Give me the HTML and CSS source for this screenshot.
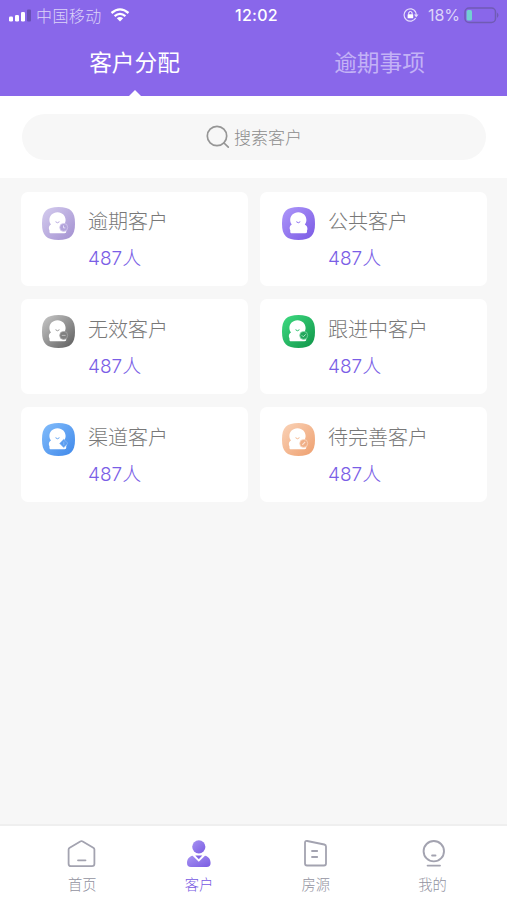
FILE: index.html
```
<!DOCTYPE html>
<html lang="zh-CN">
<head>
    <meta charset="UTF-8">
    <meta name="viewport" content="width=device-width, initial-scale=1.0">
    <title>客户分配</title>
    <link rel="stylesheet" href="styles.css">
</head>
<body>
    <!-- shared shapes and gradients -->
    <svg class="defs" width="0" height="0">
        <defs>
            <linearGradient id="g-overdue" x1="0" y1="0" x2="1" y2="1"><stop offset="0" stop-color="#d5cdef"/><stop offset="1" stop-color="#a28fd0"/></linearGradient>
            <linearGradient id="g-public" x1="0" y1="0" x2="1" y2="1"><stop offset="0" stop-color="#ae98fa"/><stop offset="1" stop-color="#7a59e4"/></linearGradient>
            <linearGradient id="g-invalid" x1="0" y1="0" x2="1" y2="1"><stop offset="0" stop-color="#c9c9c9"/><stop offset="1" stop-color="#5c5c5c"/></linearGradient>
            <linearGradient id="g-follow" x1="0" y1="0" x2="1" y2="1"><stop offset="0" stop-color="#3fdc82"/><stop offset="1" stop-color="#0f9448"/></linearGradient>
            <linearGradient id="g-channel" x1="0" y1="0" x2="1" y2="1"><stop offset="0" stop-color="#83bdfb"/><stop offset="1" stop-color="#3f88ea"/></linearGradient>
            <linearGradient id="g-todo" x1="0" y1="0" x2="1" y2="1"><stop offset="0" stop-color="#fad3b8"/><stop offset="1" stop-color="#ee9f6e"/></linearGradient>
            <linearGradient id="g-user" x1="0" y1="0" x2="1" y2="1"><stop offset="0" stop-color="#a793f2"/><stop offset="1" stop-color="#7a5ce2"/></linearGradient>
            <path id="tile" d="M16.500 0C28.500 0 33 4.500 33 16.500S28.500 33 16.500 33 0 28.500 0 16.500 4.500 0 16.500 0Z"/>
            <g id="person">
                <path fill="#fff" stroke="none" d="M15.500 5.300C20.400 5.300 23.600 9 23.600 13.100C23.600 14.900 23 16.300 22 17.400C23.900 18.500 24.900 20.300 24.600 22.200C24.400 23.300 24 23.500 24.200 24.300C24.500 25.500 23.700 26.300 22.500 26.300H9.200C7.800 26.300 7.200 25.400 7.500 24.200C7.700 23.300 7.100 22.900 6.900 21.800C6.600 19.900 7.400 18.400 9 17.400C8 16.300 7.400 14.900 7.400 13.100C7.400 9 10.600 5.300 15.500 5.300Z"/>
                <path class="smile" d="M13.800 15Q15.500 16.800 17.200 15"/>
            </g>
        </defs>
    </svg>

    <div class="phone">
        <header class="header">
            <div class="status">
                <div class="status-left">
                    <svg class="signal" width="23" height="13" viewBox="0 0 23 13">
                        <rect x="0" y="7.500" width="4" height="5" rx="1.300" fill="#fff"/>
                        <rect x="6" y="6" width="4" height="6.500" rx="1.300" fill="#fff"/>
                        <rect x="12" y="3" width="4" height="9.500" rx="1.300" fill="#fff"/>
                        <rect x="18" y="0.500" width="4" height="12" rx="1" fill="#6950b6"/>
                    </svg>
                    <span class="carrier">中国移动</span>
                    <svg class="wifi" width="20" height="14" viewBox="0 0 20 14">
                        <path d="M1.500 5Q10 -2.200 18.500 5M4.600 8.200Q10 3.600 15.400 8.200" fill="none" stroke="#fff" stroke-width="2.300"/>
                        <path d="M6.800 10.300Q10 7.800 13.200 10.300L10 13.600Z" fill="#fff"/>
                    </svg>
                </div>
                <span class="time">12:02</span>
                <div class="status-right">
                    <svg class="lock" width="16" height="14" viewBox="0 0 16 14">
                        <path d="M12.700 4A6.200 6.200 0 1 0 12.700 10" fill="none" stroke="#e4dcfb" stroke-width="1.200"/>
                        <path d="M12 3A6.200 6.200 0 0 1 13.200 7.500" fill="none" stroke="#e4dcfb" stroke-width="1.200"/>
                        <path d="M11 6.500H15.500L13.200 9.500Z" fill="#e4dcfb"/>
                        <rect x="4.600" y="6.300" width="5.600" height="4" rx="0.500" fill="#fff"/>
                        <path d="M5.700 6.500V5.200a1.700 1.700 0 0 1 3.400 0V6.500" fill="none" stroke="#fff"/>
                    </svg>
                    <span class="percent">18%</span>
                    <svg class="battery" width="36" height="17" viewBox="0 0 36 17">
                        <rect x="1" y="1" width="30.500" height="14.500" rx="4" fill="none" stroke="#705bb4" stroke-width="1.500"/>
                        <rect x="2.600" y="3" width="5.400" height="10.500" rx="1.500" fill="#72cfd2"/>
                        <path d="M33 5.500Q36 8.200 33 11Z" fill="#705bb4"/>
                    </svg>
                </div>
            </div>
            <nav class="tabs">
                <a class="tab active">客户分配</a>
                <a class="tab">逾期事项</a>
            </nav>
        </header>

        <div class="search-bar">
            <div class="search">
                <svg width="24" height="24" viewBox="0 0 24 24" fill="none" stroke="#969696" stroke-width="1.700" stroke-linecap="round">
                    <circle cx="11" cy="11" r="9.700"/>
                    <path d="M18 18L22.300 22.200"/>
                </svg>
                <span>搜索客户</span>
            </div>
        </div>

        <main class="grid">
            <div class="card">
                <svg class="icon" viewBox="0 0 33 33">
                    <use href="#tile" fill="url(#g-overdue)"/>
                    <use href="#person" stroke="#b8a9e0"/>
                    <circle cx="21.700" cy="20.400" r="4" fill="#b3a4db" stroke="#d8cff0" stroke-width="0.700"/>
                    <path d="M21.500 18.500V20.900H23.300" fill="none" stroke="#e9e3f8" stroke-width="0.900"/>
                </svg>
                <div class="info">
                    <div class="name">逾期客户</div>
                    <div class="count">487人</div>
                </div>
            </div>
            <div class="card">
                <svg class="icon" viewBox="0 0 33 33">
                    <use href="#tile" fill="url(#g-public)"/>
                    <use href="#person" x="0.800" stroke="#8c70ee"/>
                </svg>
                <div class="info">
                    <div class="name">公共客户</div>
                    <div class="count">487人</div>
                </div>
            </div>
            <div class="card">
                <svg class="icon" viewBox="0 0 33 33">
                    <use href="#tile" fill="url(#g-invalid)"/>
                    <use href="#person" stroke="#999"/>
                    <circle cx="21.700" cy="20.400" r="4" fill="#808080" stroke="#aaa" stroke-width="0.700"/>
                    <path d="M19.800 20.400H23.600" stroke="#bbb" stroke-width="1"/>
                </svg>
                <div class="info">
                    <div class="name">无效客户</div>
                    <div class="count">487人</div>
                </div>
            </div>
            <div class="card">
                <svg class="icon" viewBox="0 0 33 33">
                    <use href="#tile" fill="url(#g-follow)"/>
                    <use href="#person" stroke="#2bbf6c"/>
                    <circle cx="21.700" cy="20.400" r="4" fill="#23a75c" stroke="#8edcb0" stroke-width="0.700"/>
                    <path d="M19.800 20.300L21.300 21.800L23.700 19.300" fill="none" stroke="#b5ebcb" stroke-width="0.900"/>
                </svg>
                <div class="info">
                    <div class="name">跟进中客户</div>
                    <div class="count">487人</div>
                </div>
            </div>
            <div class="card">
                <svg class="icon" viewBox="0 0 33 33">
                    <use href="#tile" fill="url(#g-channel)"/>
                    <use href="#person" stroke="#63a4f3"/>
                    <path d="M17.700 20.400L21.700 16.200L26 20.400L21.700 24.600Z" fill="#5b9df0" stroke="#8bbcf7" stroke-width="0.700"/>
                    <path d="M21.800 18.600V22.200" stroke="#8bbcf7" stroke-width="0.900"/>
                </svg>
                <div class="info">
                    <div class="name">渠道客户</div>
                    <div class="count">487人</div>
                </div>
            </div>
            <div class="card">
                <svg class="icon" viewBox="0 0 33 33">
                    <use href="#tile" fill="url(#g-todo)"/>
                    <use href="#person" stroke="#f4b78f"/>
                    <circle cx="21.700" cy="20.400" r="4" fill="#f0af87" stroke="#fbdcc8" stroke-width="0.700"/>
                    <path d="M20.300 21.800L23.200 18.900" stroke="#fce6d8" stroke-width="1.100"/>
                </svg>
                <div class="info">
                    <div class="name">待完善客户</div>
                    <div class="count">487人</div>
                </div>
            </div>
        </main>

        <footer class="tabbar">
            <a class="item">
                <svg width="30" height="30" viewBox="0 0 30 30" fill="none" stroke="#a3a3b0" stroke-width="1.800" stroke-linejoin="round" stroke-linecap="round">
                    <path d="M13.700 2.300Q14.500 1.800 15.300 2.300L26.300 8.700Q27.400 9.400 27.400 10.500V24.800Q27.400 27.200 25 27.200H4Q1.600 27.200 1.600 24.800V10.500Q1.600 9.400 2.700 8.700Z"/>
                    <path d="M11 21.300H18.500"/>
                </svg>
                <span>首页</span>
            </a>
            <a class="item active">
                <svg width="30" height="30" viewBox="0 0 30 30">
                    <circle cx="14.800" cy="7.800" r="6.600" fill="url(#g-user)"/>
                    <path fill="url(#g-user)" d="M8.600 16.700L14.800 22.700L21 16.700C24.600 17.400 26.600 20.400 26.600 24C26.600 26.600 25.300 28 22.600 28H7C4.300 28 3 26.600 3 24C3 20.400 5 17.400 8.600 16.700Z"/>
                    <path fill="#8267e4" d="M11.300 16.500H18.300L14.800 20.300Z"/>
                </svg>
                <span>客户</span>
            </a>
            <a class="item">
                <svg width="30" height="30" viewBox="0 0 30 30" fill="none" stroke="#a3a3b0" stroke-width="1.800" stroke-linejoin="round" stroke-linecap="round">
                    <path d="M4 3.800Q4 1.600 6.200 2L23.300 5.500Q25 5.900 25 7.500V24.500Q25 26.500 23 26.500H6Q4 26.500 4 24.500Z"/>
                    <path d="M11 12H16.200M11 18H16.200"/>
                </svg>
                <span>房源</span>
            </a>
            <a class="item">
                <svg width="30" height="30" viewBox="0 0 30 30" fill="none" stroke="#a3a3b0" stroke-width="1.900" stroke-linecap="round">
                    <circle cx="15.800" cy="12.200" r="10.200"/>
                    <path d="M14.100 16.500H17.500M9.600 26.600H22"/>
                </svg>
                <span>我的</span>
            </a>
        </footer>
    </div>
</body>
</html>
```

FILE: styles.css
```
* {
    box-sizing: border-box;
}

body {
    margin: 0;
    background: #f7f7f7;
    font-family: "Noto Sans CJK SC", "Noto Sans", sans-serif;
    font-weight: 300;
}

.defs {
    position: absolute;
}

.phone {
    display: flex;
    flex-direction: column;
    height: 900px;
    overflow: hidden;
}

/* Header */
.header {
    height: 96px;
    background: #8967ea;
    color: #fff;
}

.status {
    display: flex;
    justify-content: space-between;
    align-items: center;
    height: 30px;
    padding: 0 7px 0 9px;
}

.status-left, .status-right {
    display: flex;
    align-items: center;
    flex: 1;
}

.status-right {
    justify-content: flex-end;
}

.carrier {
    margin-left: 4px;
    padding-bottom: 1px;
    font-size: 16px;
    letter-spacing: 0.4px;
    line-height: 28px;
    color: #dcd3f8;
}

.wifi {
    margin-left: 8px;
}

.time {
    margin-left: 4px;
    font-family: Inter, sans-serif;
    font-size: 16px;
    font-weight: 500;
    letter-spacing: 0.3px;
}

.percent {
    margin: 0 4px 0 9px;
    font-family: Inter, sans-serif;
    font-size: 16px;
    font-weight: 400;
    color: #ddd4f9;
}

.tabs {
    display: flex;
    height: 66px;
    padding: 0 5px 0 12px;
}

.tab {
    position: relative;
    flex: 1;
    text-align: center;
    font-size: 22.700px;
    font-weight: 400;
    line-height: 64px;
    color: #c3b2f6;
}

.tab.active {
    color: #fff;
}

.tab.active::after {
    content: "";
    position: absolute;
    left: 50%;
    bottom: 0;
    margin-left: -6px;
    border: 6.500px solid transparent;
    border-top: 0;
    border-bottom: 6.500px solid #fff;
}

/* Search */
.search-bar {
    height: 82px;
    padding: 18px 21px 0 22px;
    background: #fff;
}

.search {
    display: flex;
    justify-content: center;
    align-items: center;
    gap: 4px;
    height: 46px;
    border-radius: 23px;
    background: #f7f7f7;
    color: #8c8c8c;
    font-size: 17px;
}

.search span {
    line-height: 24px;
    padding-bottom: 1px;
}

/* Customer groups */
.grid {
    flex: 1;
    display: grid;
    grid-template-columns: 1fr 1fr;
    grid-auto-rows: 94.500px;
    gap: 13.400px 12px;
    padding: 13.500px 20px 0 21px;
}

.card {
    display: flex;
    padding: 15.500px 21px 0;
    border-radius: 7px;
    background: #fff;
}

.card:nth-child(even) {
    padding-left: 22px;
}

.icon {
    width: 33px;
    height: 33px;
}

.smile {
    fill: none;
    stroke-width: 1;
    stroke-linecap: round;
}

.info {
    margin-top: -1px;
    margin-left: 13px;
}

.name {
    font-size: 20px;
    line-height: 30px;
    color: #787878;
}

.count {
    margin-top: 8px;
    font-family: Inter, "Noto Sans CJK SC", sans-serif;
    font-size: 19px;
    line-height: 30px;
    color: #7a5ee6;
}

/* Bottom bar */
.tabbar {
    display: flex;
    height: 76px;
    padding: 13px 16px 0 24px;
    border-top: 2px solid #efefef;
    background: #fff;
}

.item {
    flex: 1;
    display: flex;
    flex-direction: column;
    align-items: center;
    font-size: 14.300px;
    line-height: 20px;
    color: #9292a0;
}

.item span {
    margin-top: 5px;
}

.item.active {
    color: #7658e2;
}
```
